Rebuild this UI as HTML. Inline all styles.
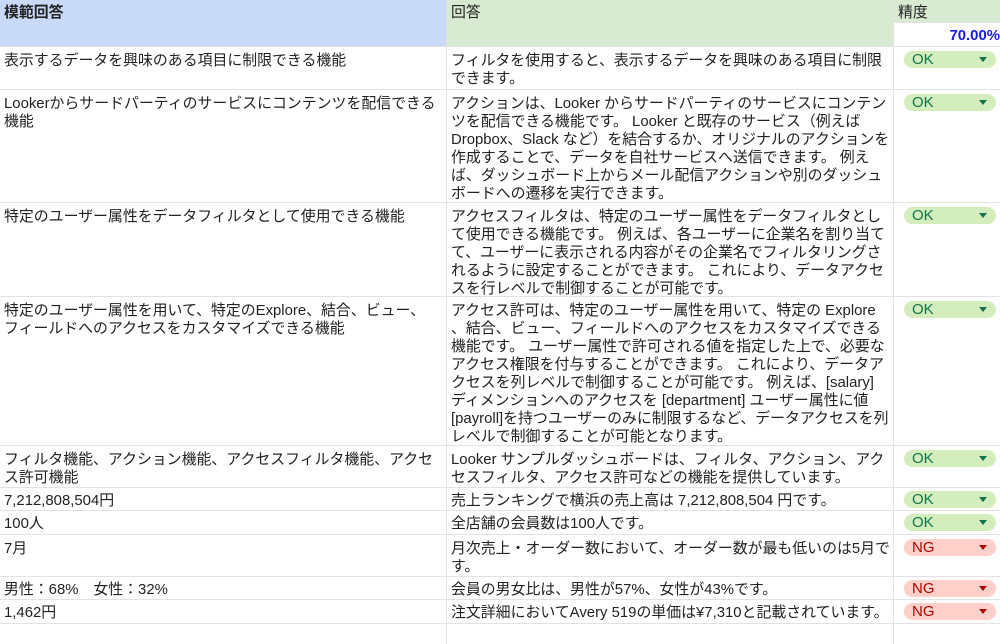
<!DOCTYPE html>
<html><head><meta charset="utf-8"><style>
*{margin:0;padding:0;box-sizing:border-box}
body{width:1000px;height:631px;overflow:hidden;background:#fff;font-family:"Liberation Sans","Noto Sans CJK JP",sans-serif;font-size:14.9px;color:#222;}
.r{position:absolute;left:0;width:1000px;border-bottom:1px solid #e2e2e2}
.c{position:absolute;top:0;bottom:0;padding:5px 4px 0 4px;line-height:18px;white-space:nowrap;overflow:hidden;border-right:1px solid #e2e2e2}
.c1{left:0;width:447px}.c2{left:447px;width:447px}.c3{left:894px;width:106px;border-right:none}
.s{padding-top:4px}
.p{position:absolute;left:10px;top:4px;width:92px;height:17px;border-radius:9px;font-size:15px;line-height:17px;padding-left:8px}
.ok{background:#d4edbc;color:#11734b}.ng{background:#ffcfc9;color:#b10202}
.p:after{content:"";position:absolute;right:9px;top:6px;border-left:4px solid transparent;border-right:4px solid transparent;border-top:5px solid currentColor}
</style></head><body>
<div class="r" style="top:0;height:47px">
<div class="c c1" style="background:#c9daf8;font-weight:bold;padding-top:4px">模範回答</div>
<div class="c c2" style="background:#d9ead3;padding-top:4px">回答</div>
<div class="c c3" style="background:#d9ead3;bottom:23px;border-bottom:1px solid #e2e2e2;padding-top:4px">精度</div>
<div style="position:absolute;left:894px;top:24px;width:106px;height:22px;text-align:right;color:#1a1ae0;font-weight:bold;line-height:24px">70.00%</div>
</div>
<div class="r" style="top:47px;height:43px"><div class="c c1">表示するデータを興味のある項目に制限できる機能</div><div class="c c2">フィルタを使用すると、表示するデータを興味のある項目に制限<br>できます。</div><div class="c c3"><div class="p ok">OK</div></div></div>
<div class="r" style="top:90px;height:113px"><div class="c c1">Lookerからサードパーティのサービスにコンテンツを配信できる<br>機能</div><div class="c c2">アクションは、Looker からサードパーティのサービスにコンテン<br>ツを配信できる機能です。 Looker と既存のサービス（例えば<br>Dropbox、Slack など）を結合するか、オリジナルのアクションを<br>作成することで、データを自社サービスへ送信できます。 例え<br>ば、ダッシュボード上からメール配信アクションや別のダッシュ<br>ボードへの遷移を実行できます。</div><div class="c c3"><div class="p ok">OK</div></div></div>
<div class="r" style="top:203px;height:94px"><div class="c c1">特定のユーザー属性をデータフィルタとして使用できる機能</div><div class="c c2">アクセスフィルタは、特定のユーザー属性をデータフィルタとし<br>て使用できる機能です。 例えば、各ユーザーに企業名を割り当て<br>て、ユーザーに表示される内容がその企業名でフィルタリングさ<br>れるように設定することができます。 これにより、データアクセ<br>スを行レベルで制御することが可能です。</div><div class="c c3"><div class="p ok">OK</div></div></div>
<div class="r" style="top:297px;height:149px"><div class="c c1">特定のユーザー属性を用いて、特定のExplore、結合、ビュー、<br>フィールドへのアクセスをカスタマイズできる機能</div><div class="c c2">アクセス許可は、特定のユーザー属性を用いて、特定の Explore<br>、結合、ビュー、フィールドへのアクセスをカスタマイズできる<br>機能です。 ユーザー属性で許可される値を指定した上で、必要な<br>アクセス権限を付与することができます。 これにより、データア<br>クセスを列レベルで制御することが可能です。 例えば、[salary]<br>ディメンションへのアクセスを [department] ユーザー属性に値<br>[payroll]を持つユーザーのみに制限するなど、データアクセスを列<br>レベルで制御することが可能となります。</div><div class="c c3"><div class="p ok">OK</div></div></div>
<div class="r" style="top:446px;height:42px"><div class="c c1">フィルタ機能、アクション機能、アクセスフィルタ機能、アクセ<br>ス許可機能</div><div class="c c2">Looker サンプルダッシュボードは、フィルタ、アクション、アク<br>セスフィルタ、アクセス許可などの機能を提供しています。</div><div class="c c3"><div class="p ok">OK</div></div></div>
<div class="r" style="top:488px;height:23px"><div class="c c1 s">7,212,808,504円</div><div class="c c2 s">売上ランキングで横浜の売上高は 7,212,808,504 円です。</div><div class="c c3"><div class="p ok" style="top:3px">OK</div></div></div>
<div class="r" style="top:511px;height:24px"><div class="c c1 s">100人</div><div class="c c2 s">全店舗の会員数は100人です。</div><div class="c c3"><div class="p ok" style="top:3px">OK</div></div></div>
<div class="r" style="top:535px;height:42px"><div class="c c1">7月</div><div class="c c2">月次売上・オーダー数において、オーダー数が最も低いのは5月で<br>す。</div><div class="c c3"><div class="p ng">NG</div></div></div>
<div class="r" style="top:577px;height:23px"><div class="c c1 s">男性：68%　女性：32%</div><div class="c c2 s">会員の男女比は、男性が57%、女性が43%です。</div><div class="c c3"><div class="p ng" style="top:3px">NG</div></div></div>
<div class="r" style="top:600px;height:24px"><div class="c c1 s">1,462円</div><div class="c c2 s">注文詳細においてAvery 519の単価は¥7,310と記載されています。</div><div class="c c3"><div class="p ng" style="top:3px">NG</div></div></div>
<div class="r" style="top:624px;height:20px;border:none"><div class="c c1"></div><div class="c c2"></div></div>
</body></html>
